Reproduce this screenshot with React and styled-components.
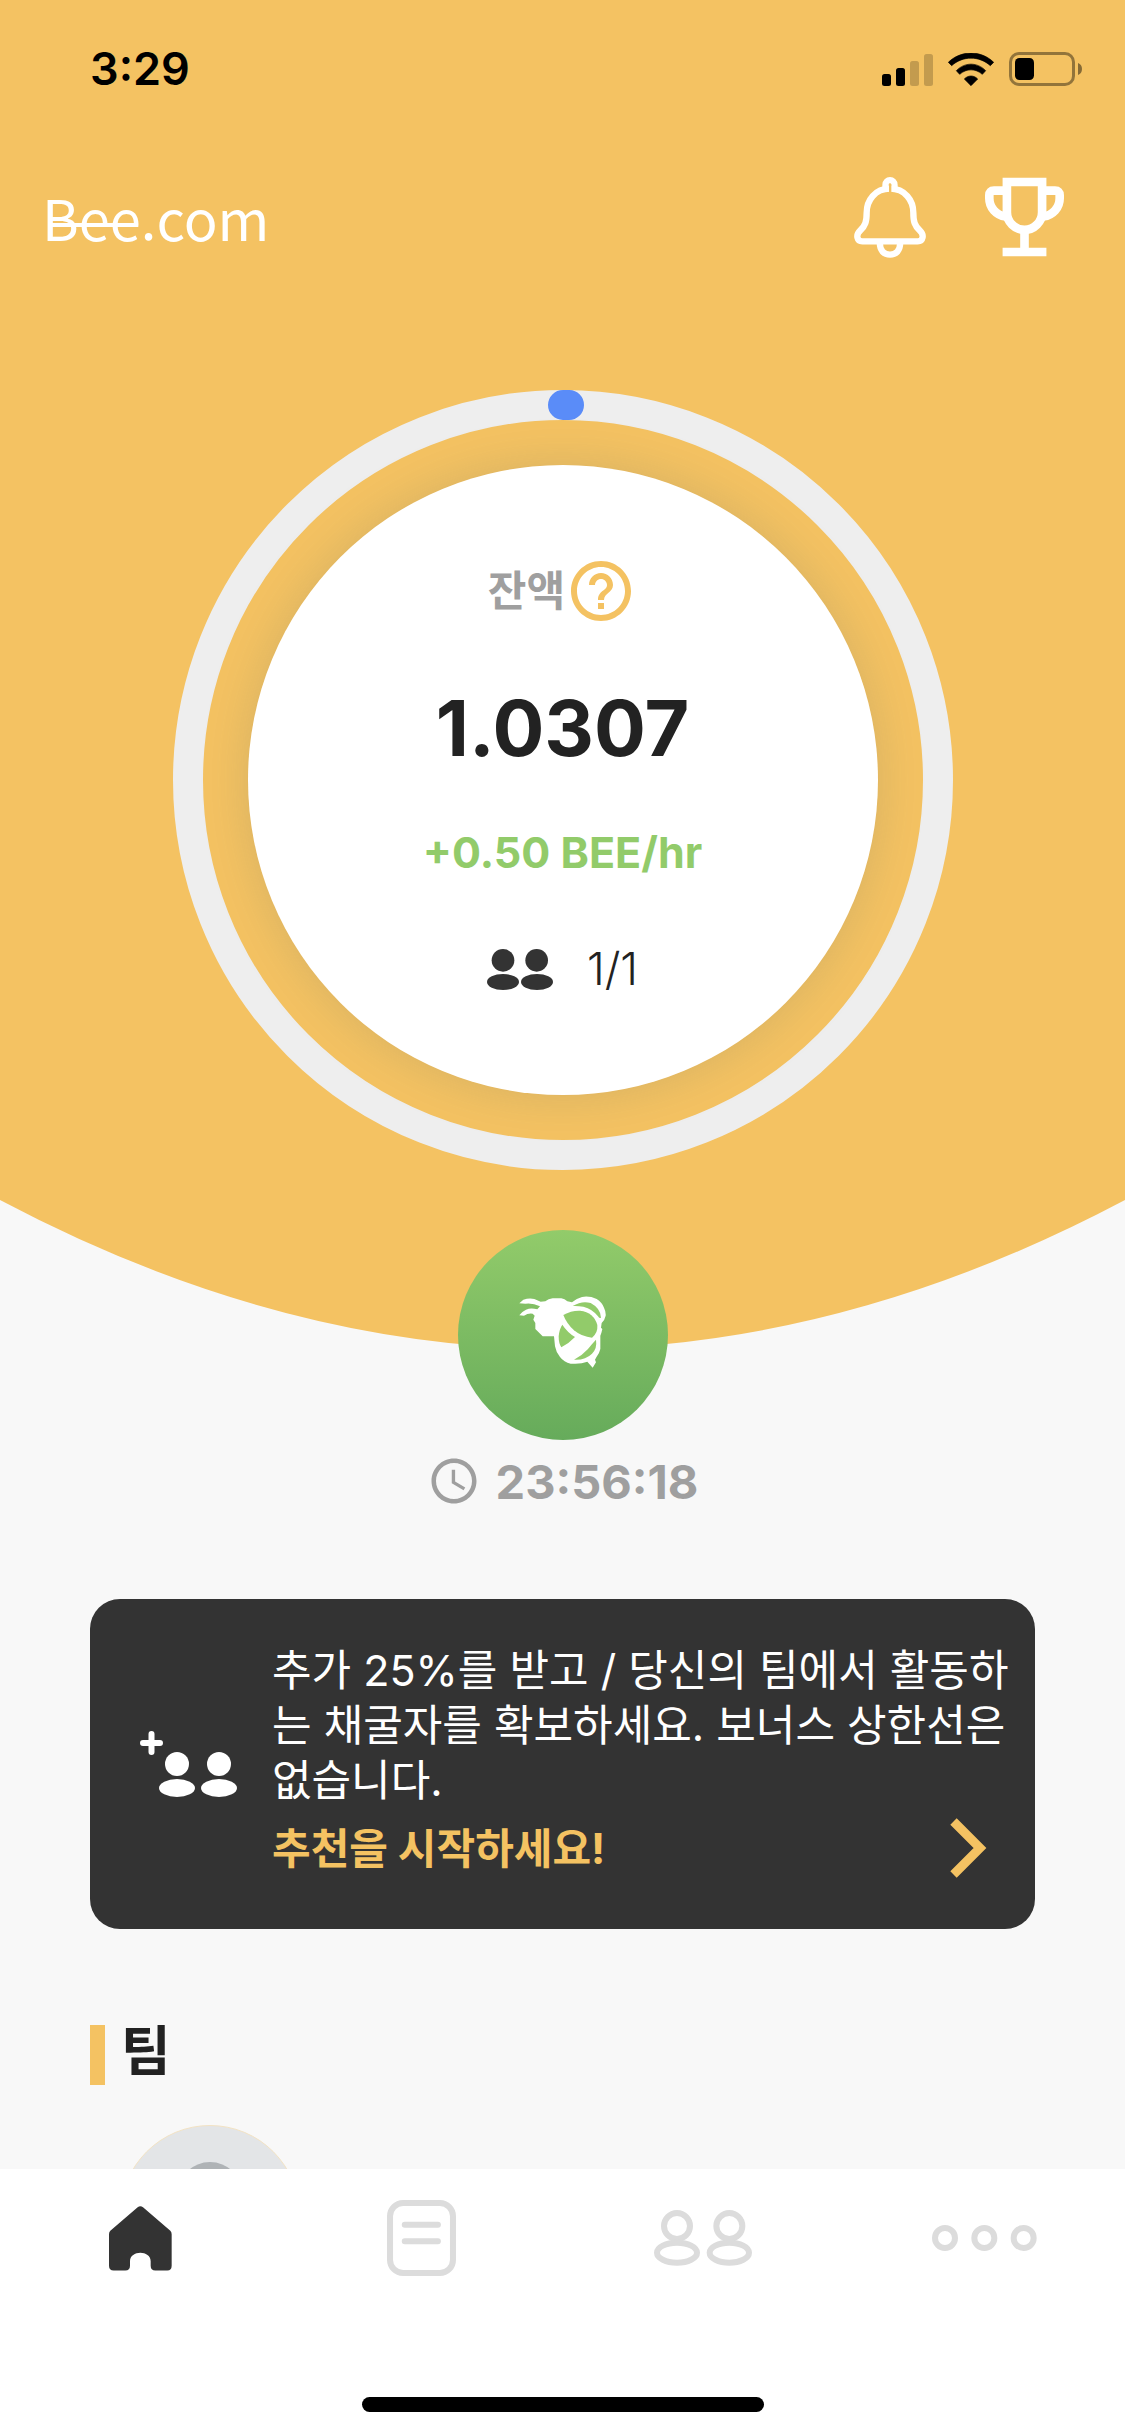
import React from "react";
import styled, { createGlobalStyle } from "styled-components";
import { MdHelpOutline, MdAccessTime } from "react-icons/md";

const color = {
  honey: "#f4c262",
  page: "#f8f8f8",
  ink: "#222222",
  dark: "#333333",
  muted: "#9f9f9f",
  idle: "#dcdcdc",
  leaf: "#92cb6a",
};

const GlobalStyle = createGlobalStyle`
  * { box-sizing: border-box; }
  body {
    margin: 0;
    background: ${color.page};
    color: ${color.ink};
    font-family: Inter, "Noto Sans CJK KR", sans-serif;
  }
  button { font: inherit; color: inherit; background: none; border: 0; padding: 0; cursor: pointer; }
  a { color: inherit; text-decoration: none; }
  svg { display: block; flex: none; }
  h1, h2, p { margin: 0; font: inherit; }
`;

const Screen = styled.div`
  display: flex;
  flex-direction: column;
  height: 100vh;
`;

const Content = styled.main`
  flex: 1;
  min-height: 0;
  overflow-y: auto;
  scrollbar-width: none;
`;

const Hero = styled.section`
  background: ${color.honey};
  padding-bottom: 30px;
`;

const StatusBar = styled.div`
  display: flex;
  align-items: center;
  justify-content: space-between;
  height: 138px;
  padding: 0 43px 0 90px;
`;

const Clock = styled.time`
  color: #000;
  font-size: 45px;
  font-weight: 600;
  line-height: 56px;
`;

const StatusIcons = styled.div`
  display: flex;
  align-items: center;
  gap: 15px;
`;

const Header = styled.header`
  display: flex;
  align-items: center;
  justify-content: space-between;
  height: 158px;
  padding: 0 61px 0 42px;
  color: #fff;
`;

const Logo = styled.a`
  font-family: "Noto Sans CJK KR", sans-serif;
  font-size: 56px;
  line-height: 72px;
`;

const LogoMark = styled.span`
  position: relative;

  &::after {
    content: "";
    position: absolute;
    left: 8px;
    right: 4px;
    bottom: 30px;
    height: 4px;
    background: #fff;
  }
`;

const HeaderActions = styled.div`
  display: flex;
  align-items: center;
  gap: 59px;
`;

const Dial = styled.div`
  display: grid;
  place-items: center;
  margin-top: 94px;

  > * { grid-area: 1 / 1; }
`;

const Balance = styled.div`
  display: flex;
  flex-direction: column;
  align-items: center;
  width: 630px;
  height: 630px;
  padding-top: 90px;
  border-radius: 50%;
  background: #fff;
  box-shadow: 0 0 45px rgba(130, 130, 100, 0.27);
`;

const BalanceLabel = styled.div`
  display: flex;
  align-items: center;
  color: ${color.muted};
  font-size: 42px;
  font-weight: 700;
  line-height: 72px;
`;

const HelpButton = styled.button`
  color: ${color.honey};
`;

const Amount = styled.p`
  margin-top: 56px;
  font-size: 77px;
  font-weight: 700;
  line-height: 90px;
`;

const Rate = styled.p`
  margin-top: 54px;
  color: ${color.leaf};
  font-size: 43px;
  font-weight: 700;
  line-height: 50px;
`;

const Members = styled.div`
  display: flex;
  align-items: center;
  gap: 34px;
  margin-top: 67px;
  color: ${color.ink};
  font-size: 45px;
  font-weight: 300;
  line-height: 50px;
`;

const HeroCurve = styled.svg`
  width: 100%;
  height: 150px;
`;

const Mining = styled.section`
  position: relative;
  display: flex;
  flex-direction: column;
  align-items: center;
  gap: 18px;
  margin-top: -120px;
`;

const MineButton = styled.button`
  display: grid;
  place-items: center;
  width: 210px;
  height: 210px;
  padding-bottom: 6px;
  border-radius: 50%;
  background: linear-gradient(#92cb6a, #66ab5b);
`;

const Countdown = styled.div`
  display: flex;
  align-items: center;
  gap: 15px;
  height: 46px;
  color: ${color.muted};
  font-size: 47px;
  font-weight: 700;
`;

const Invite = styled.a`
  display: flex;
  align-items: center;
  gap: 35px;
  min-height: 330px;
  margin: 95px 90px 0;
  padding: 0 25px 0 50px;
  border-radius: 30px;
  background: ${color.dark};
  color: #fff;
`;

const InviteBody = styled.div`
  flex: 1;
  padding-bottom: 7px;
  font-size: 43px;
  line-height: 55px;
`;

const InviteAction = styled.div`
  display: flex;
  align-items: center;
  justify-content: space-between;
  margin-top: 10px;
  padding-right: 23px;
  color: ${color.honey};
  font-size: 42px;
  font-weight: 700;
`;

const TeamTitle = styled.h2`
  display: flex;
  align-items: flex-start;
  gap: 16px;
  margin: 96px 90px 0;
  font-size: 54px;
  font-weight: 700;
  line-height: 54px;

  &::before {
    content: "";
    width: 15px;
    height: 60px;
    background: ${color.honey};
  }
`;

const Avatar = styled.div`
  width: 180px;
  height: 180px;
  margin: 40px 120px;
  overflow: hidden;
  border: 1px solid #f3e3c4;
  border-radius: 50%;
  background: #e3e5e7;
`;

const Footer = styled.footer`
  display: flex;
  flex-direction: column;
  align-items: center;
  gap: 90px;
  padding-bottom: 24px;
  background: #fff;
`;

const Tabs = styled.nav`
  display: grid;
  grid-template-columns: repeat(4, 1fr);
  width: 100%;
  height: 138px;
`;

const Tab = styled.a`
  display: grid;
  place-items: center;
  color: ${({ $active }) => ($active ? color.dark : color.idle)};
`;

const HomeIndicator = styled.div`
  width: 402px;
  height: 15px;
  border-radius: 8px;
  background: #000;
`;

const SignalIcon = () => (
  <svg width="51" height="33" viewBox="0 0 51 33">
    <rect x="0" y="21" width="9" height="12" rx="2.5" />
    <rect x="14" y="15" width="9" height="18" rx="2.5" />
    <rect x="28" y="8" width="9" height="25" rx="2.5" opacity="0.2" />
    <rect x="42" y="1" width="9" height="32" rx="2.5" opacity="0.2" />
  </svg>
);

const WifiIcon = () => (
  <svg width="46" height="33" viewBox="445 96 136 99">
    <path d="M445 124C483 87 543 87 581 124L571 134C538 104 488 104 455 134Z" stroke="#000" strokeWidth="2" strokeLinejoin="round" />
    <path d="M469 149C494 123 532 123 557 149L547 160C527 142 499 142 479 160Z" stroke="#000" strokeWidth="2" strokeLinejoin="round" />
    <path d="M493 174C504 162 522 162 533 174L513 194Z" stroke="#000" strokeWidth="2" strokeLinejoin="round" />
  </svg>
);

const BatteryIcon = () => (
  <svg width="73" height="34" viewBox="0 0 73 34">
    <rect x="1.5" y="1.5" width="63" height="31" rx="8.5" fill="none" stroke="#000" strokeWidth="3" opacity="0.4" />
    <rect x="6" y="6" width="19" height="22" rx="4.5" />
    <path d="M69 11a6.5 6.5 0 0 1 0 12z" opacity="0.45" />
  </svg>
);

const BellIcon = () => (
  <svg width="72" height="81" viewBox="162 468 216 243" fill="none" stroke="currentColor" strokeWidth="19">
    <path d="M256.500 505V491a13.500 13.500 0 0 1 27 0V505" />
    <path d="M270 503C225 503 200 538 200 575C200 602 196 614 181 628C166 642 171 661 187 661H353C369 661 374 642 359 628C344 614 340 602 340 575C340 538 315 503 270 503Z" />
    <path d="M239.500 665C239 688 252 701 270 701C288 701 301 688 300.500 665" />
    <path d="M270.500 490V513" stroke={color.honey} strokeWidth="7" />
  </svg>
);

const TrophyIcon = () => (
  <svg width="79" height="80" viewBox="555 469 238 239" fill="none" stroke="currentColor" strokeWidth="26">
    <path d="M621 483H727V574A53 53 0 0 1 621 574Z" />
    <path d="M621 509H582Q568 509 568 523V532C568 560 588 583 617 587" />
    <path d="M727 509H766Q780 509 780 523V532C780 560 760 583 731 587" />
    <path d="M674 630V694M608 694H740" />
  </svg>
);

const PeopleIcon = () => (
  <svg width="66" height="41" viewBox="258 1285 198 123" fill={color.dark}>
    <circle cx="306" cy="1319" r="34" />
    <circle cx="407" cy="1319" r="34" />
    <ellipse cx="306" cy="1384" rx="48" ry="24" />
    <ellipse cx="408" cy="1384" rx="48" ry="24" />
  </svg>
);

const AddPeopleIcon = () => (
  <svg width="97" height="66" viewBox="180 453 291 198" fill="currentColor">
    <path d="M189 489H240M214.500 462V516" stroke="currentColor" strokeWidth="18" strokeLinecap="round" />
    <circle cx="291" cy="552" r="36" />
    <circle cx="417" cy="552" r="36" />
    <ellipse cx="291" cy="624" rx="54" ry="27" />
    <ellipse cx="417" cy="624" rx="54" ry="27" />
  </svg>
);

const BeeIcon = () => (
  <svg width="88" height="72" viewBox="57 49 264 216">
    <path
      fill="#fff"
      d="M58 71L70 60Q88 54 103 58L122 66L136 65Q145 57 158 56H184Q194 58 202 65L216 68Q230 56 246 52Q268 48 290 58Q306 68 312 84Q318 96 317 108Q314 122 305 130L303 144L307 148L304 160L301 168V208Q298 222 289 233L285 240L288 248L278 264L262 246Q246 252 226 252H212Q192 248 180 232Q168 218 165 200L162 170H128L106 148V130L100 120L104 108L98 102Q84 100 72 108L58 107Q68 94 78 90Q92 84 112 89L120 80Q98 69 76 72Z"
    />
    <g fill={color.leaf}>
      <path d="M218 79Q246 62 272 70Q302 86 303 114Q298 118 294 110Q278 88 250 81Q232 78 218 79Z" />
      <path d="M190 106Q214 92 240 93Q282 98 292 136Q294 160 276 174Q246 172 222 152Q200 132 190 106Z" />
      <path d="M187 135Q202 158 225 172Q206 192 184 203Q176 192 176 170Q178 148 187 135Z" />
      <path d="M288 180Q292 206 276 222Q256 242 222 240Q246 228 264 208Q278 190 288 180Z" />
    </g>
  </svg>
);

const ChevronIcon = () => (
  <svg width="37" height="60" viewBox="0 0 37 60" fill="none" stroke="currentColor" strokeWidth="9">
    <path d="M3.500 3.500L30 30L3.500 56.500" />
  </svg>
);

const HomeIcon = () => (
  <svg width="63" height="65" viewBox="153 675 189 194" fill="currentColor">
    <path d="M239 678Q247 672 255 678L337 749Q341 753 341 759V854Q341 868 328 868H292Q278 868 278 854V840C278 806 216 806 216 840V854Q216 868 202 868H167Q153 868 153 854V759Q153 753 157 749Z" />
  </svg>
);

const DocIcon = () => (
  <svg width="69" height="76" viewBox="88 151 206 227" fill="none" stroke="currentColor" strokeWidth="18">
    <rect x="97" y="160" width="188" height="209" rx="39" />
    <path d="M141 225H240M141 274H240" strokeLinecap="round" />
  </svg>
);

const TeamIcon = () => (
  <svg width="98" height="56" viewBox="882 181 294 168" fill="none" stroke="currentColor" strokeWidth="18">
    <circle cx="951" cy="229" r="39" />
    <circle cx="1108" cy="229" r="39" />
    <ellipse cx="951" cy="309" rx="60" ry="30" />
    <ellipse cx="1108" cy="309" rx="59" ry="30" />
  </svg>
);

const MoreIcon = () => (
  <svg width="105" height="26" viewBox="456 220 315 78" fill="none" stroke="currentColor" strokeWidth="18">
    <circle cx="495" cy="259" r="30" />
    <circle cx="613" cy="259" r="30" />
    <circle cx="731" cy="259" r="30" />
  </svg>
);

const ProgressRing = () => (
  <svg width="780" height="780" viewBox="0 0 780 780" fill="none" strokeWidth="30">
    <circle cx="390" cy="390" r="375" stroke="#eeeeee" />
    <path d="M390 15A375 375 0 0 1 396 15.050" stroke="#5a8cf8" strokeLinecap="round" />
  </svg>
);

const tabs = [
  { label: "홈", Icon: HomeIcon, active: true },
  { label: "뉴스", Icon: DocIcon },
  { label: "팀", Icon: TeamIcon },
  { label: "더보기", Icon: MoreIcon },
];

export default function App() {
  return (
    <Screen lang="ko">
      <GlobalStyle />
      <Content>
        <Hero>
          <StatusBar>
            <Clock>3:29</Clock>
            <StatusIcons>
              <SignalIcon />
              <WifiIcon />
              <BatteryIcon />
            </StatusIcons>
          </StatusBar>
          <Header>
            <Logo href="#">
              <LogoMark>Bee</LogoMark>.com
            </Logo>
            <HeaderActions>
              <button type="button" aria-label="알림">
                <BellIcon />
              </button>
              <button type="button" aria-label="순위">
                <TrophyIcon />
              </button>
            </HeaderActions>
          </Header>
          <Dial>
            <ProgressRing />
            <Balance>
              <BalanceLabel>
                잔액
                <HelpButton type="button" aria-label="도움말">
                  <MdHelpOutline size={72} />
                </HelpButton>
              </BalanceLabel>
              <Amount>1.0307</Amount>
              <Rate>+0.50 BEE/hr</Rate>
              <Members>
                <PeopleIcon />
                1/1
              </Members>
            </Balance>
          </Dial>
        </Hero>
        <HeroCurve viewBox="0 0 1125 150" preserveAspectRatio="none" aria-hidden="true">
          <path d="M0 0Q562.500 298 1125 0Z" fill={color.honey} />
        </HeroCurve>
        <Mining>
          <MineButton type="button" aria-label="채굴">
            <BeeIcon />
          </MineButton>
          <Countdown>
            <MdAccessTime size={54} />
            <time>23:56:18</time>
          </Countdown>
        </Mining>
        <Invite href="#">
          <AddPeopleIcon />
          <InviteBody>
            <p>추가 25%를 받고 / 당신의 팀에서 활동하는 채굴자를 확보하세요. 보너스 상한선은 없습니다.</p>
            <InviteAction>
              추천을 시작하세요!
              <ChevronIcon />
            </InviteAction>
          </InviteBody>
        </Invite>
        <TeamTitle>팀</TeamTitle>
        <Avatar>
          <svg width="178" height="178" viewBox="0 0 178 178" fill="#afb3b6">
            <circle cx="89" cy="68" r="32" />
            <ellipse cx="89" cy="150" rx="58" ry="40" />
          </svg>
        </Avatar>
      </Content>
      <Footer>
        <Tabs>
          {tabs.map(({ label, Icon, active }) => (
            <Tab key={label} href="#" aria-label={label} $active={active}>
              <Icon />
            </Tab>
          ))}
        </Tabs>
        <HomeIndicator />
      </Footer>
    </Screen>
  );
}
